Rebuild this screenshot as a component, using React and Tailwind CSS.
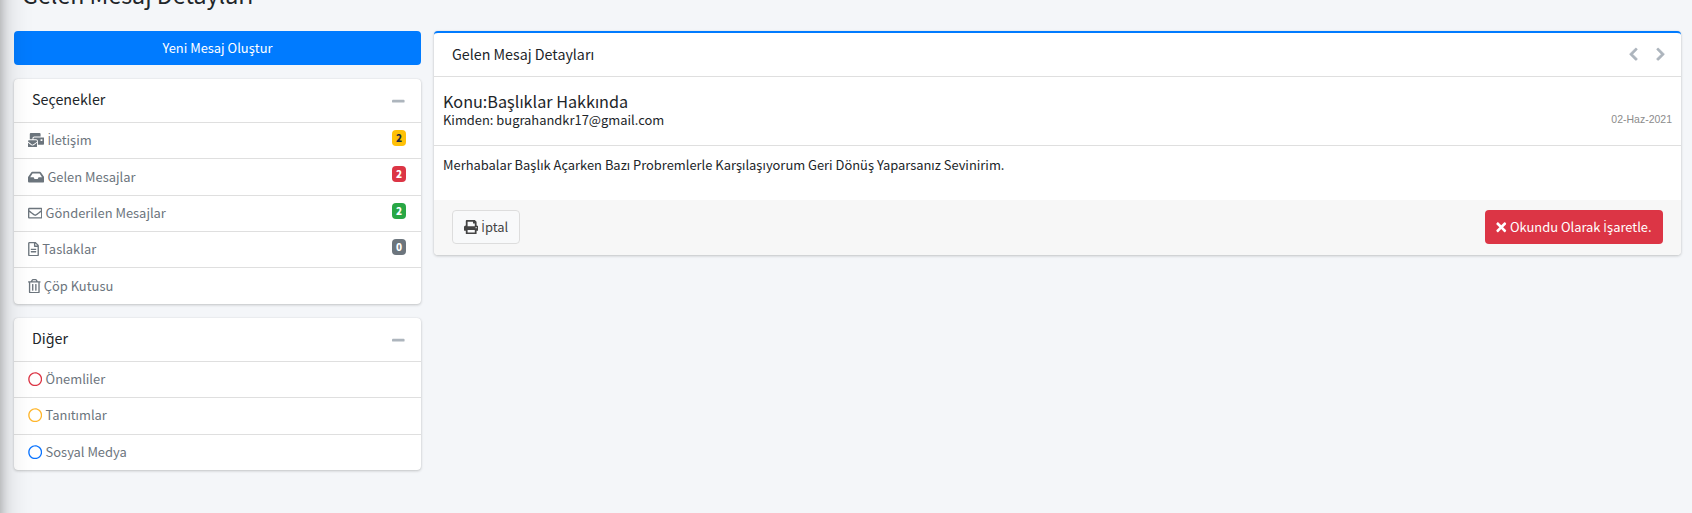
import {
  FaMailBulk,
  FaInbox,
  FaRegEnvelope,
  FaRegFileAlt,
  FaRegTrashAlt,
  FaRegCircle,
  FaMinus,
  FaChevronLeft,
  FaChevronRight,
  FaPrint,
  FaTimes,
} from "react-icons/fa";

const card =
  "bg-white rounded-[4px] shadow-[0_0_1px_rgba(0,0,0,0.13),0_1px_3px_rgba(0,0,0,0.2)]";

const options = [
  { label: "İletişim", Icon: FaMailBulk, icon: "w-[16.2px]", badge: "2", tone: "bg-[#ffc107] text-[#1f2d3d]", row: "h-[36px]", link: "h-[34px]" },
  { label: "Gelen Mesajlar", Icon: FaInbox, icon: "w-[16.2px]", badge: "2", tone: "bg-[#dc3545] text-white", row: "h-[37px]", link: "h-[36px]" },
  { label: "Gönderilen Mesajlar", Icon: FaRegEnvelope, icon: "w-[14.4px]", badge: "2", tone: "bg-[#28a745] text-white", row: "h-[36px]", link: "h-[34px]" },
  { label: "Taslaklar", Icon: FaRegFileAlt, icon: "w-[11px]", badge: "0", tone: "bg-[#6c757d] text-white", row: "h-[36px]", link: "h-[34px]" },
  { label: "Çöp Kutusu", Icon: FaRegTrashAlt, icon: "w-[12.6px]", row: "h-[37px]", link: "h-[36px]" },
];

const others = [
  { label: "Önemliler", Icon: FaRegCircle, icon: "w-[14.4px] text-[#dc3545]", row: "h-[36px]", link: "h-[34px]" },
  { label: "Tanıtımlar", Icon: FaRegCircle, icon: "w-[14.4px] text-[#ffb62c]", row: "h-[37px]", link: "h-[34px]" },
  { label: "Sosyal Medya", Icon: FaRegCircle, icon: "w-[14.4px] text-[#0b74ff]", row: "h-[36px]", link: "h-[34px]" },
];

// The dotted capital İ is set in Open Sans, which carries it as a single glyph.
function Label({ children }) {
  const parts = children.split(/(İ)/);
  return (
    <span className="whitespace-pre">
      {parts.map((part, i) =>
        part === "İ" ? (
          <span key={i} className="font-['Open_Sans',sans-serif] leading-none">İ</span>
        ) : (
          part
        )
      )}
    </span>
  );
}

function FolderCard({ title, items }) {
  return (
    <section className={card}>
      <header className="flex h-[43px] items-start justify-between pl-[18px] pr-[16.5px]">
        <h3 className="pt-[10px] text-[14.3px] leading-5">{title}</h3>
        <FaMinus className="mt-[15px] h-[14.4px] w-[12.6px] text-[#adb5bd]" />
      </header>
      <ul>
        {items.map(({ label, Icon, icon, badge, tone, row, link }) => (
          <li
            key={label}
            className={`flex items-start justify-between border-t border-[#dfdfdf] pl-[14px] pr-[15px] text-[#6c757d] ${row}`}
          >
            <a className={`flex items-center gap-[3.2px] ${link}`}>
              <Icon className={`h-[14.4px] shrink-0 ${icon}`} />
              <Label>{label}</Label>
            </a>
            {badge && (
              <span
                className={`mt-[7px] flex h-4 w-[14px] items-center justify-center rounded-[4px] text-[10px] leading-none font-black ${tone}`}
              >
                {badge}
              </span>
            )}
          </li>
        ))}
      </ul>
    </section>
  );
}

export default function App() {
  return (
    <div className="relative h-[513px] overflow-hidden bg-[#f4f6f9] font-['Noto_Sans_CJK_SC','Noto_Sans',sans-serif] text-[12.92px] leading-5 text-[#212529]">
      <h1 className="-mt-[23px] h-[54px] pl-[22px] text-[23.2px] leading-[34px]">
        Gelen Mesaj Detayları
      </h1>
      <div className="flex items-start gap-[13px] pl-[14px]">
        <aside className="flex w-[407px] flex-col gap-[14px]">
          <button className="h-[34px] rounded-[4px] bg-[#007bff] text-center text-white">
            Yeni Mesaj Oluştur
          </button>
          <FolderCard title="Seçenekler" items={options} />
          <FolderCard title="Diğer" items={others} />
        </aside>
        <main className={`w-[1247px] overflow-hidden border-t-2 border-[#007bff] ${card}`}>
          <header className="flex h-[44px] items-center justify-between border-b border-[#dfdfdf] pl-[18px] pr-[16px]">
            <h3 className="pb-[2px] text-[14.25px]">Gelen Mesaj Detayları</h3>
            <div className="flex gap-[18px] text-[#adb5bd]">
              <FaChevronLeft className="h-[14.4px] w-[9px] stroke-current stroke-[24]" />
              <FaChevronRight className="h-[14.4px] w-[9px] stroke-current stroke-[24]" />
            </div>
          </header>
          <div className="flex h-[69px] items-start justify-between border-b border-[#dfdfdf] px-[9px]">
            <div className="pt-[14px]">
              <h5 className="text-[16.2px] leading-[20px]">Konu:Başlıklar Hakkında</h5>
              <h6 className="leading-[17px]">Kimden: bugrahandkr17@gmail.com</h6>
            </div>
            <time className="pt-[32px] font-['Liberation_Sans',sans-serif] text-[10.5px] text-[#8c8c8c]">
              02-Haz-2021
            </time>
          </div>
          <p className="h-[54px] px-[9px] pt-[9px]">
            Merhabalar Başlık Açarken Bazı Probremlerle Karşılaşıyorum Geri Dönüş Yaparsanız Sevinirim.
          </p>
          <footer className="flex h-[55px] items-start justify-between bg-[#f7f7f7] px-[18px] pt-[10px]">
            <button className="flex h-[34px] w-[68px] items-center justify-center gap-[3px] rounded-[4px] border border-[#ddd] bg-[#f8f9fa] text-[#444]">
              <FaPrint className="size-[14.4px]" />
              <Label>İptal</Label>
            </button>
            <button className="flex h-[34px] w-[178px] items-center justify-center gap-[3px] rounded-[4px] bg-[#dc3545] text-white">
              <FaTimes className="h-[14.4px] w-[10.5px]" />
              <Label>Okundu Olarak İşaretle.</Label>
            </button>
          </footer>
        </main>
      </div>
      <div className="pointer-events-none absolute top-[-50px] bottom-[-50px] left-[-225px] w-[225px] shadow-[0_14px_28px_rgba(0,0,0,0.25),0_10px_10px_rgba(0,0,0,0.22)]" />
    </div>
  );
}
